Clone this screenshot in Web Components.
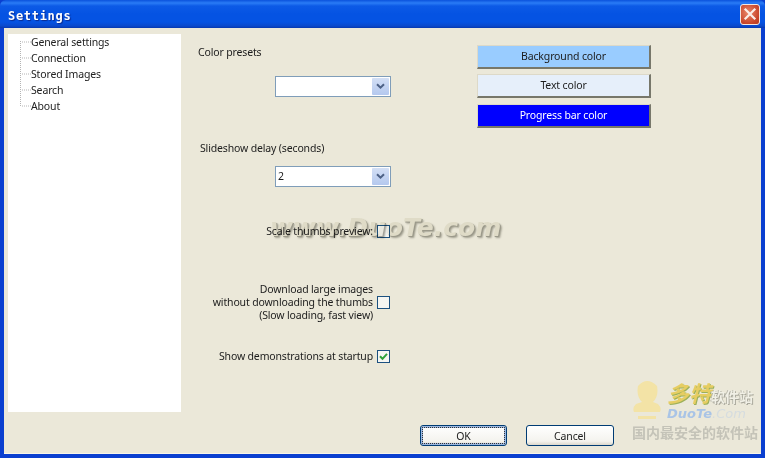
<!DOCTYPE html>
<html><head><meta charset="utf-8">
<style>
html,body{margin:0;padding:0;background:#ece9d8}
body{width:765px;height:458px;overflow:hidden;font:10.5px "Noto Sans",sans-serif;letter-spacing:-.15px;color:#1c1c1c}
</style></head><body>
<xp-window title="Settings">
  <settings-tree slot="side">
    <span>General settings</span><span>Connection</span><span>Stored Images</span><span>Search</span><span>About</span>
  </settings-tree>
  <settings-form slot="main"></settings-form>
  <dialog-footer slot="foot"></dialog-footer>
</xp-window>
<script>
function el(name,html){customElements.define(name,class extends HTMLElement{
  connectedCallback(){ if(this.shadowRoot) return; this.attachShadow({mode:'open'}).innerHTML=typeof html==='function'?html(this):html; }
});}
el('xp-window',h=>`<style>
:host{display:flex;flex-direction:column;width:765px;height:458px;box-sizing:border-box;position:relative;overflow:hidden;
 background:#0a3fd0}
.bar{height:28px;flex:none;display:flex;align-items:center;justify-content:space-between;padding:3px 5px 0 8px;box-sizing:border-box;
 background:linear-gradient(#0a52dc 0,#2a7cf6 3px,#0c5ae6 6px,#0553e3 14px,#0553e3 22px,#0a49cc 26px,#0638b0 28px);border-radius:6px 6px 0 0}
.x{margin-top:-3px;width:20px;height:21px;box-sizing:border-box;border:1px solid #f2e6e0;border-radius:3px;background:radial-gradient(circle at 40% 40%,#e9876a,#c8452a 70%,#b23a20);display:flex;align-items:center;justify-content:center}
.t{font:bold 12px "DejaVu Sans Mono",monospace;letter-spacing:.7px;color:#fff;text-shadow:1px 1px 1px #0a2a90}
.client{flex:1;margin:0 4px 4px 4px;display:flex;flex-direction:column;min-height:0;border-bottom:1px solid #f7f5ea;background:#ebe8d9}
.row{flex:1;display:flex;min-height:0;padding:6px 0 0 4px}
</style>
<div class="bar"><span class="t">${h.getAttribute('title')}</span>
<span class="x"><svg width="14" height="14" viewBox="0 0 14 14"><path d="M2.5 2.5L11.5 11.5M11.5 2.5L2.5 11.5" stroke="#fbeee8" stroke-width="2.2" stroke-linecap="square"/></svg></span></div>
<div class="client"><div class="row"><slot name="side"></slot><slot name="main"></slot></div><slot name="foot"></slot></div>
<brand-marks></brand-marks>`);
el('settings-tree',`<style>
:host{display:flex;flex-direction:column;width:173px;height:378px;flex:none;box-sizing:border-box;background:#fff;padding:0 0 0 23px;position:relative;line-height:16px;color:#222}
::slotted(span){display:block;height:16px}
svg{position:absolute;left:12px;top:0}
</style><svg width="12" height="80"><path d="M.5 7V73M2 8H11M2 24H11M2 40H11M2 56H11M2 72H11" stroke="#b4b4b4" stroke-dasharray="1 1" fill="none"/></svg><slot></slot>`);
el('xp-select',h=>`<style>
:host{display:flex;width:116px;height:21px;box-sizing:border-box;border:1px solid #7f9db9;background:#fff;padding:1px;align-items:stretch}
.v{flex:1;padding-left:1px;line-height:17px}
.b{width:17px;background:linear-gradient(#d3dff5,#b4c8ee);border-radius:1px;display:flex;align-items:center;justify-content:center}
</style><span class="v">${h.getAttribute('value')||''}</span><span class="b"><svg width="9" height="7" viewBox="0 0 9 7"><path d="M1 1.2L4.5 4.7L8 1.2" fill="none" stroke="#4d6185" stroke-width="2"/></svg></span>`);
el('xp-check',h=>`<style>
:host{display:block;width:13px;height:13px;box-sizing:border-box;border:1px solid #1c5180;background:#f6f6f2;flex:none}
svg{display:block}
</style>${h.hasAttribute('checked')?'<svg width="11" height="11" viewBox="0 0 11 11"><path d="M2 5.2L4.5 7.8L9 2.8" fill="none" stroke="#2fa23a" stroke-width="2"/></svg>':''}`);
el('color-button',h=>`<style>
:host{display:flex;width:174px;height:24px;box-sizing:border-box;padding-bottom:1px;align-items:center;justify-content:center;
 background:${h.getAttribute('bg')};color:${h.getAttribute('fg')||'#1c1c1c'};border:1px solid #ddd9c8;border-right:2px solid #77776a;border-bottom:2px solid #77776a}
</style>${h.getAttribute('label')}`);
el('xp-button',h=>`<style>
:host{display:flex;width:${h.getAttribute('w')}px;height:21px;box-sizing:border-box;align-items:center;justify-content:center;border-radius:3px;border:1px solid #003c74;
 background:linear-gradient(#fff,#f4f3ee 80%,#dcd8cc);color:#1c1c1c;${h.hasAttribute('default')?'box-shadow:inset 0 0 0 2px #9db8e0;outline:1px dotted #333;outline-offset:-3px':''}}
</style>${h.getAttribute('label')}`);
el('settings-form',`<style>
:host{display:grid;flex:1;grid-template-columns:279px 174px;align-content:start;padding-left:17px}
.l{display:flex;flex-direction:column;align-items:flex-start}
.lab{margin-top:11px;height:14px;line-height:14px}
.lab2{margin:44px 0 0 2px;height:14px;line-height:14px}
xp-select{margin-left:77px}
.s1{margin-top:17px}.s2{margin-top:11px}
.c{display:flex;align-items:center;justify-content:flex-end;width:192px;gap:4px;text-align:right;white-space:nowrap}
.c1{margin-top:37px}.c2{margin-top:45px;line-height:13px}.c3{margin-top:27px}
.r{display:flex;flex-direction:column;padding-top:11px}
.r :nth-child(2){margin-top:5px}.r :nth-child(3){margin-top:6px}
</style>
<div class="l">
<span class="lab">Color presets</span>
<xp-select class="s1"></xp-select>
<span class="lab2">Slideshow delay (seconds)</span>
<xp-select class="s2" value="2"></xp-select>
<div class="c c1"><span>Scale thumbs preview:</span><xp-check></xp-check></div>
<div class="c c2"><span>Download large images<br>without downloading the thumbs<br>(Slow loading, fast view)</span><xp-check></xp-check></div>
<div class="c c3"><span>Show demonstrations at startup</span><xp-check checked></xp-check></div>
</div>
<div class="r">
<color-button bg="#99ccff" label="Background color"></color-button>
<color-button bg="#e6effa" label="Text color"></color-button>
<color-button bg="#0000ff" fg="#fff" label="Progress bar color"></color-button>
</div>`);
el('dialog-footer',`<style>
:host{display:flex;flex:none;height:38px;padding:10px 147px 0 0;box-sizing:border-box;justify-content:flex-end;gap:19px}
</style><xp-button default w="87" label="OK"></xp-button><xp-button w="88" label="Cancel"></xp-button>`);
el('brand-marks',`<style>
:host{display:contents}
.wm{position:absolute;left:270px;top:213px;font:italic bold 25px "DejaVu Sans",sans-serif;letter-spacing:0;color:#f2f1ea;text-shadow:1px 1px 0 #a8a8a2,2px 2px 2px #b0b0aa;white-space:nowrap;mix-blend-mode:multiply}
.logo{position:absolute;left:630px;top:378px;width:130px;height:64px;letter-spacing:0}
.m{position:absolute;left:0;top:0}
.a{position:absolute;left:37px;top:0;font:italic bold 22px "Noto Sans CJK SC",sans-serif;color:#e6cd62;text-shadow:1px 1px 0 #9cb05a;white-space:nowrap;line-height:28px}
.a small{font:bold 14px "Noto Sans CJK SC",sans-serif;font-style:normal;color:#f1f0e6;text-shadow:1px 1px 0 #a9a89c,-1px 0 0 #b9b8ac}
.d{position:absolute;left:37px;top:29px;font:italic bold 13px/13px "DejaVu Sans",sans-serif;color:#a9c4e6;white-space:nowrap}
.d i{color:#d5dcdf;font-weight:normal}
.c{position:absolute;left:2px;top:46px;font:bold 14px "Noto Sans CJK SC",sans-serif;color:#c4c3b8;white-space:nowrap;line-height:16px}
</style><div class="wm">www.DuoTe.com</div>
<div class="logo"><svg class="m" width="34" height="44" viewBox="0 0 34 44"><path d="M8 8Q17-2 27 8Q29 18 23 24L28 26Q32 30 30 34H4Q2 30 6 26L12 24Q6 18 8 8ZM8 38H26V41H8Z" fill="#f3e3a6"/></svg>
<span class="a">多特<small>软件站</small></span><span class="d">DuoTe<i>.Com</i></span><span class="c">国内最安全的软件站</span></div>`);
</script></body></html>
